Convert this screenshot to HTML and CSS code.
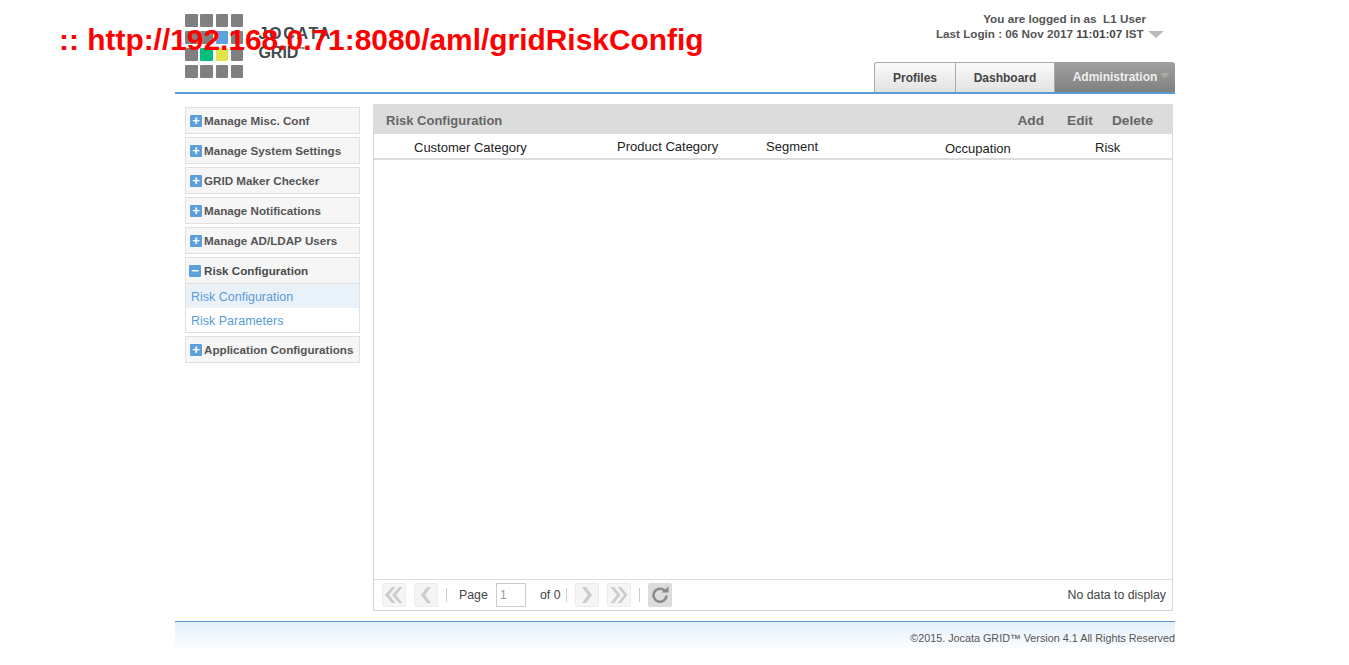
FILE: index.html
```html
<!DOCTYPE html>
<html lang="en">
<head>
  <meta charset="UTF-8" />
  <title>Risk Configuration</title>
  <link rel="stylesheet" href="styles.css">
</head>
<body>
  <!-- Url stamp over the page -->
  <div class="url-stamp">:: http://192.168.0.71:8080/aml/gridRiskConfig</div>

  <div class="wrap">
    <!-- Header -->
    <header class="header">
      <div class="logo">
        <div class="tiles">
          <i></i><i></i><i></i><i></i>
          <i></i><i></i><i class="blue"></i><i></i>
          <i></i><i class="green"></i><i class="yellow"></i><i></i>
          <i></i><i></i><i></i><i></i>
        </div>
        <div class="logo-text"><span class="logo-name">JOCATA</span><br />GRID<sup>™</sup></div>
      </div>
      <div class="header-right">
        <div class="user-info">
          <div class="user-line">You are logged in as &nbsp;L1 User</div>
          <div class="login-line">Last Login : 06 Nov 2017 <b>11:01:07</b> IST <span class="caret"></span></div>
        </div>
        <nav class="tabs">
          <a class="tab">Profiles</a>
          <a class="tab">Dashboard</a>
          <a class="tab active">Administration<span class="tab-caret"></span></a>
        </nav>
      </div>
    </header>

    <div class="content">
      <!-- Left menu -->
      <aside class="sidebar">
        <div class="menu-head"><span class="toggle">+</span>Manage Misc. Conf</div>
        <div class="menu-head"><span class="toggle">+</span>Manage System Settings</div>
        <div class="menu-head"><span class="toggle">+</span>GRID Maker Checker</div>
        <div class="menu-head"><span class="toggle">+</span>Manage Notifications</div>
        <div class="menu-head"><span class="toggle">+</span>Manage AD/LDAP Users</div>
        <div class="menu-group">
          <div class="menu-head open"><span class="toggle">−</span>Risk Configuration</div>
          <a class="menu-link current">Risk Configuration</a>
          <a class="menu-link">Risk Parameters</a>
        </div>
        <div class="menu-head"><span class="toggle">+</span>Application Configurations</div>
      </aside>

      <!-- Grid -->
      <main class="panel">
        <div class="panel-title">
          <span>Risk Configuration</span>
          <div class="panel-actions">
            <a>Add</a>
            <a>Edit</a>
            <a>Delete</a>
          </div>
        </div>
        <div class="grid-head">
          <span class="col col-customer">Customer Category</span>
          <span class="col col-product">Product Category</span>
          <span class="col col-segment">Segment</span>
          <span class="col col-occupation">Occupation</span>
          <span class="col col-risk">Risk</span>
        </div>
        <div class="grid-body"></div>
        <div class="pager">
          <span class="pg-btn"><svg width="20" height="18" viewBox="0 0 20 18"><path d="M8 1 1 9l7 8h3.500L5 9l6.500-8zM15 1 8 9l7 8h3.500L12 9l6.500-8z" /></svg></span>
          <span class="pg-btn"><svg width="20" height="18" viewBox="0 0 20 18"><path d="M11 1 5 9l6 8h4L9 9l6-8z" /></svg></span>
          <span class="pg-sep"></span>
          <span class="pg-label">Page</span>
          <input class="pg-input" value="1" />
          <span class="pg-of">of 0</span>
          <span class="pg-sep tight"></span>
          <span class="pg-btn"><svg width="20" height="18" viewBox="0 0 20 18"><path d="M5 1h4l6 8-6 8H5l6-8z" /></svg></span>
          <span class="pg-btn"><svg width="20" height="18" viewBox="0 0 20 18"><path d="M1.500 1H5l6.500 8L5 17H1.500L8 9zM8.500 1H12l6.500 8-6.500 8H8.500L15 9z" /></svg></span>
          <span class="pg-sep"></span>
          <span class="pg-btn refresh"><svg width="20" height="20" viewBox="0 0 20 20"><path d="M16.500 10.500a6.500 6.500 0 1 1-2-5" fill="none" stroke-width="2.600" /><path class="fill" d="M11.500 7.500h7v-6z" /></svg></span>
          <span class="pg-info">No data to display</span>
        </div>
      </main>
    </div>

    <footer class="footer">©2015. Jocata GRID™ Version 4.1 All Rights Reserved</footer>
  </div>
</body>
</html>
```

FILE: styles.css
```css
* { box-sizing: border-box; margin: 0; padding: 0; }

body {
  background: #fff;
  font-family: 'Liberation Sans', Arial, sans-serif;
  font-size: 12px;
  color: #333;
  overflow: hidden;
}

.url-stamp {
  position: absolute;
  left: 59px;
  top: 23px;
  font-size: 29.900px;
  line-height: 33px;
  font-weight: bold;
  color: #f00;
  white-space: nowrap;
  z-index: 10;
}

.wrap {
  width: 1000px;
  margin-left: 175px;
}

/* Header */
.header {
  height: 94px;
  border-bottom: 2px solid #5b9bd5;
  display: flex;
  justify-content: space-between;
  padding-left: 10px;
}
.logo {
  display: flex;
  padding-top: 14px;
}
.tiles {
  display: grid;
  grid-template-columns: repeat(4, 12.500px);
  grid-template-rows: repeat(4, 13px);
  column-gap: 2.800px;
  row-gap: 4px;
  height: 64px;
}
.tiles i { background: #808080; border-radius: 1px; }
.tiles .blue { background: #5ba3dc; }
.tiles .green { background: #00c080; }
.tiles .yellow { background: #e2e44a; }
.logo-text {
  margin: 10px 0 0 15px;
  font-size: 16px;
  line-height: 19px;
  font-weight: bold;
  color: #404a50;
}
.logo-name { letter-spacing: 1.700px; }
.logo-text sup { font-size: 7px; vertical-align: 6px; line-height: 0; }

.header-right {
  display: flex;
  flex-direction: column;
  align-items: flex-end;
  justify-content: space-between;
}
.user-info {
  padding: 11px 11px 0 0;
  font-size: 11.700px;
  font-weight: bold;
  line-height: 15px;
  color: #555;
  text-align: right;
}
.user-line { padding-right: 18px; }
.login-line b { color: #444; }
.caret {
  display: inline-block;
  width: 0;
  height: 0;
  margin-left: 1px;
  border-left: 8px solid transparent;
  border-right: 8px solid transparent;
  border-top: 7px solid #bbb;
}

.tabs { display: flex; }
.tab {
  height: 30px;
  line-height: 31px;
  font-size: 12px;
  font-weight: bold;
  color: #444;
  text-align: center;
  background: linear-gradient(#fafafa, #e2e2e2);
  border: 1px solid #aaa;
  border-bottom: none;
  border-left-width: 1px;
}
.tab:nth-child(1) { width: 82px; border-radius: 3px 0 0 0; }
.tab:nth-child(2) { width: 99px; border-left: none; }
.tab.active {
  width: 120px;
  position: relative;
  line-height: 30px;
  color: #eee;
  background: linear-gradient(#a0a0a0, #808080);
  border: none;
  border-radius: 0 3px 0 0;
}
.tab-caret {
  position: absolute;
  top: 11px;
  right: 5px;
  border-left: 5px solid transparent;
  border-right: 5px solid transparent;
  border-top: 5px solid #aaa;
}

/* Content */
.content {
  display: flex;
  align-items: flex-start;
  padding: 10px 2px 0 10px;
}
.sidebar {
  width: 175px;
  margin: 3px 13px 0 0;
  display: flex;
  flex-direction: column;
  gap: 3px;
}
.menu-head {
  height: 27px;
  display: flex;
  align-items: center;
  padding-left: 4px;
  font-size: 11.650px;
  font-weight: bold;
  color: #555;
  background: #f6f6f6;
  border: 1px solid #e0e0e0;
  white-space: nowrap;
}
.toggle {
  width: 12px;
  height: 12px;
  margin-right: 2px;
  flex: none;
  background: #5b9fdb;
  border-radius: 1px;
  color: #fff;
  font-size: 13px;
  line-height: 12px;
  text-align: center;
}
.menu-group {
  border: 1px solid #e0e0e0;
  height: 76px;
}
.menu-group .menu-head {
  height: 26px;
  border: none;
  border-bottom: 1px solid #e0e0e0;
  padding-left: 3px;
  color: #4a4a4a;
}
.menu-group .toggle { margin-right: 3px; }
.menu-link {
  display: block;
  height: 24px;
  line-height: 26px;
  padding-left: 5px;
  font-size: 12.500px;
  color: #5b9bd5;
}
.menu-link.current { background: #eaf2f9; }

/* Grid panel */
.panel {
  width: 800px;
  height: 507px;
  display: flex;
  flex-direction: column;
  border: 1px solid #d4d4d4;
  border-top: none;
}
.panel-title {
  height: 30px;
  flex: none;
  margin: 0 -1px;
  padding: 3px 20px 0 13px;
  display: flex;
  align-items: center;
  justify-content: space-between;
  background: #dcdcdc;
  font-size: 13px;
  font-weight: bold;
  color: #666;
}
.panel-actions { display: flex; gap: 19px; font-size: 13.700px; }
.panel-actions a:first-child { margin-right: 4px; }
.grid-head {
  height: 26px;
  flex: none;
  position: relative;
  border-bottom: 2px solid #ddd;
  font-size: 13px;
  color: #222;
}
.col { position: absolute; top: 6px; white-space: nowrap; }
.col-customer { left: 40px; }
.col-product { left: 243px; top: 5px; }
.col-segment { left: 392px; top: 5px; }
.col-occupation { left: 571px; top: 7px; }
.col-risk { left: 721px; top: 6px; }
.grid-body { flex: 1; }

/* Pager */
.pager {
  height: 31px;
  flex: none;
  display: flex;
  align-items: center;
  padding: 0 6px 0 8px;
  border-top: 1px solid #ddd;
  font-size: 12.300px;
  color: #444;
}
.pg-btn {
  width: 24px;
  height: 24px;
  margin-right: 8px;
  display: flex;
  align-items: center;
  justify-content: center;
  background: #f5f5f5;
  border: 1px solid #ececec;
  border-radius: 2px;
}
.pg-btn svg { fill: #ccc; }
.pg-btn.refresh {
  margin-right: 0;
  background: #dcdcdc;
  border-color: #dcdcdc;
}
.refresh svg { fill: none; stroke: #8a8a8a; }
.refresh svg .fill { fill: #8a8a8a; stroke: none; }
.pg-sep {
  width: 1px;
  height: 14px;
  margin: 0 8px 0 0;
  background: #ccc;
}
.pg-sep.tight { margin: 0 8px 0 5px; }
.pg-label { width: 29px; margin: 0 8px 0 4px; white-space: nowrap; }
.pg-input {
  width: 30px;
  height: 24px;
  padding-left: 3px;
  border: 1px solid #ccc;
  font: 12px 'Liberation Sans', Arial, sans-serif;
  color: #999;
  margin-right: 14px;
}
.pg-info { margin-left: auto; }

/* Footer */
.footer {
  height: 30px;
  margin-top: 10px;
  padding-top: 10px;
  border-top: 1px solid #5b9bd5;
  background: linear-gradient(#e2effa, #fff);
  font-size: 10.800px;
  line-height: 13px;
  color: #555;
  text-align: right;
}
```
